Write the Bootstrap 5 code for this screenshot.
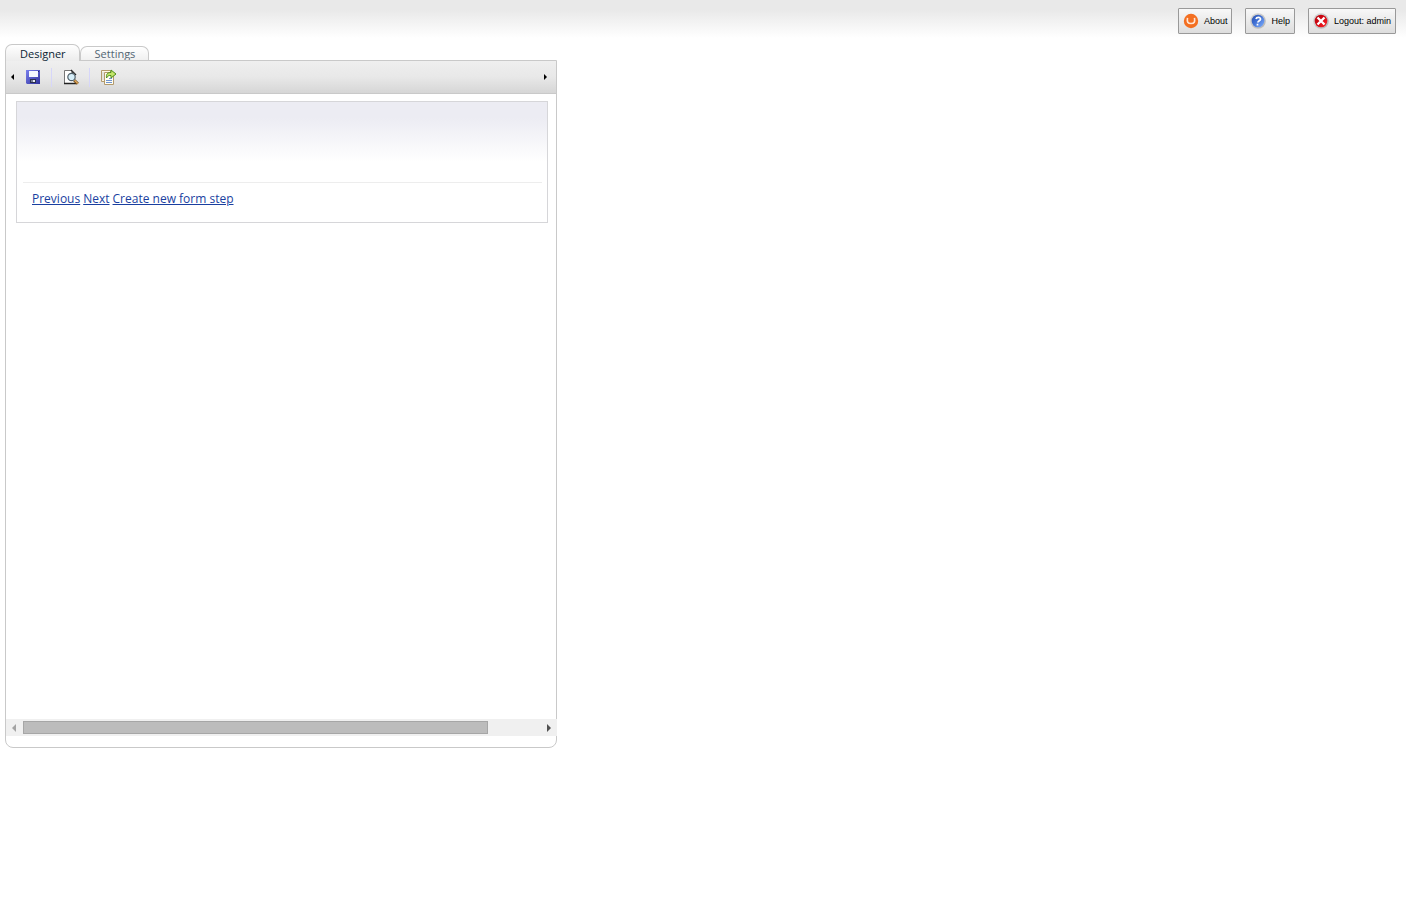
<!DOCTYPE html>
<html lang="en">
<head>
<meta charset="utf-8">
<meta name="viewport" content="width=device-width, initial-scale=1">
<title>Designer</title>
<link href="https://cdn.jsdelivr.net/npm/bootstrap@5.3.0/dist/css/bootstrap.min.css" rel="stylesheet">
<style>
body { font-family: "Open Sans", sans-serif; font-size: 12px; line-height: 16px; background: #fff; color: #111; }
.page-shell { padding-bottom: 150px; }
.topbar { height: 44px; padding: 8px 10px 0; gap: 13px; background: linear-gradient(#e9e9e9 0, #e9e9e9 10px, #fff 38px); }
.top-btn { height: 26px; padding: 0 4px; gap: 5px; font-family: "Liberation Sans", sans-serif; font-size: 9px; line-height: 12px; color: #000; border: 1px solid #999; border-radius: 1px; background: linear-gradient(#f8f8f8, #dddddd); }
.designer { max-width: 557px; padding-left: 5px; }
.designer .nav-tabs { border: 0; height: 16px; align-items: flex-end; }
.designer .nav-tabs .nav-link { height: 14px; padding: 0 13px 0 14px; margin: 0; font-size: 11px; line-height: 13px; color: #526573; border: 1px solid #c9c9c9; border-bottom: 0; border-radius: 7px 7px 0 0; background: linear-gradient(#fff, #f0f0f0); }
.designer .nav-tabs .nav-link.active { position: relative; z-index: 1; height: 17px; margin-bottom: -1px; line-height: 17px; color: #0a1d33; background: linear-gradient(#fff, #ececec); }
.panel { border: 1px solid #c9c9c9; border-radius: 0 0 8px 8px; padding-bottom: 11px; }
.toolbar { height: 33px; border-bottom: 1px solid #c9c9c9; background: linear-gradient(#efefef, #e8e8e8 50%, #d6d6d6); }
.tool-btn { padding: 0; border: 0; border-radius: 0; line-height: 0; }
.tool-arrow { width: 13px; height: 24px; }
.tool-sep { width: 1px; height: 19px; margin-right: 1px; background: #d6d6fa; }
.save-btn { margin: 0 10px 0 6px; }
.look-btn { margin: 0 10px; }
.copy-btn { margin-left: 9px; }
.canvas { padding: 7px 8px 0 10px; }
.step { border: 1px solid #d6d6d9; padding: 80px 5px 0 6px; background: linear-gradient(#ececf3 0, #ececf3 16px, #fff 60px); }
.step-links { border-top: 1px solid #ededed; padding: 8px 9px 15px; gap: 3px; }
.step-links a { color: #1a3fa0; }
.hscroll { height: 17px; margin-right: -1px; background: #f0f0f0; position: relative; }
.scroll-btn { width: 17px; height: 17px; }
.scroll-track { height: 13px; }
.scroll-thumb { width: 90%; height: 13px; background: #bcbcbc; border: 1px solid #a6a6a6; }
</style>
</head>
<body>
<div class="page-shell d-flex flex-column min-vh-100">
  <header class="topbar d-flex justify-content-end align-items-start">
    <button type="button" class="btn top-btn d-inline-flex align-items-center">
      <svg width="16" height="16" viewBox="0 0 16 16" aria-hidden="true"><circle cx="8" cy="8" r="7.2" fill="#f36f21"/><path d="M4.500 4.800c-.7 4.300.2 5.700 3.500 5.700s4.200-1.400 3.500-5.700" fill="none" stroke="#ffe6d6" stroke-width="1.600"/></svg>
      About
    </button>
    <button type="button" class="btn top-btn d-inline-flex align-items-center">
      <svg width="16" height="16" viewBox="0 0 16 16" aria-hidden="true"><defs><linearGradient id="blue" x2="1" y2="1"><stop stop-color="#2a50ac"/><stop offset=".4" stop-color="#3d6cd0"/><stop offset="1" stop-color="#80b0ff"/></linearGradient><linearGradient id="rim" x2="1" y2="1"><stop stop-color="#d8d8d8"/><stop offset="1" stop-color="#b2b2b2"/></linearGradient></defs><circle cx="8" cy="8" r="7.800" fill="url(#rim)"/><circle cx="8" cy="8" r="6.300" fill="url(#blue)"/><path d="M6 6c.5-2 4.700-2.200 4.500.1C10.400 7.700 8 7.700 7.800 9.500M7.500 10.800v1.600" stroke="#fff" stroke-width="1.700" fill="none"/></svg>
      Help
    </button>
    <button type="button" class="btn top-btn d-inline-flex align-items-center">
      <svg width="16" height="16" viewBox="0 0 16 16" aria-hidden="true"><defs><linearGradient id="red" x2="1" y2="1"><stop stop-color="#b20810"/><stop offset=".5" stop-color="#d50510"/><stop offset="1" stop-color="#ff3030"/></linearGradient></defs><circle cx="8" cy="8" r="7.800" fill="url(#rim)"/><circle cx="8" cy="8" r="6.300" fill="url(#red)"/><path d="M4.500 4.500l7 7M11.500 4.500l-7 7" stroke="#fff" stroke-width="2.300"/></svg>
      Logout: admin
    </button>
  </header>

  <main class="designer w-100 d-flex flex-column flex-fill">
    <ul class="nav nav-tabs">
      <li class="nav-item"><a class="nav-link active" href="#designer" aria-current="page">Designer</a></li>
      <li class="nav-item"><a class="nav-link" href="#settings">Settings</a></li>
    </ul>
    <section class="panel d-flex flex-column flex-fill">
      <div class="toolbar d-flex align-items-center">
        <button type="button" class="btn tool-btn tool-arrow" aria-label="Scroll toolbar left"><svg width="5" height="7" viewBox="0 0 5 7"><path d="M4 0v6L1 3z"/></svg></button>
        <button type="button" class="btn tool-btn save-btn" aria-label="Save">
          <svg width="16" height="16" viewBox="0 0 16 16"><defs><linearGradient id="disk" x2="1" y2="1"><stop stop-color="#7a80ee"/><stop offset="1" stop-color="#30329c"/></linearGradient></defs><path d="M1 1h14v14H2l-1-1z" fill="url(#disk)"/><path d="M4 2h9v6H4z" fill="#f4f8ff"/><path d="M13 2h1v1h-1z" fill="#20246c"/><path d="M5 10h6v4H5z" fill="#2a3050"/><path d="M8 11h2v2H8z" fill="#e8eaf2"/><path d="M6 11h2v2H6z" fill="#777e95"/></svg>
        </button>
        <span class="tool-sep"></span>
        <button type="button" class="btn tool-btn look-btn" aria-label="Preview">
          <svg width="16" height="16" viewBox="0 0 16 16"><path d="M1.500 1.500h7l3.500 3.500v9.500H1.500z" fill="#fff"/><path d="M1.500 14.500V1.500h7" fill="none" stroke="#777"/><path d="M8 1l5 5M1 14.500h12" fill="none" stroke="#222" stroke-width="1.300"/><path d="M8.500 1.500V5H12z" fill="#444"/><path d="M11.200 11.200l3.600 3.600" stroke="#6c4718" stroke-width="3"/><path d="M11.500 11.300l3.300 3.200" stroke="#e0a95c" stroke-width="1.500"/><circle cx="8.500" cy="8" r="3.700" fill="#d5edf8" stroke="#4f5f69" stroke-width="1.200"/></svg>
        </button>
        <span class="tool-sep"></span>
        <button type="button" class="btn tool-btn copy-btn" aria-label="Copy form">
          <svg width="17" height="16" viewBox="0 0 17 16"><path d="M1.500 1.500h9v11h-9z" fill="#fff9e6" stroke="#b39a6c"/><path d="M2.500 4h1M2.500 6h1M2.500 8h1M2.500 10h1" stroke="#8c9cbe"/><path d="M4.500 3.500h9v12h-9z" fill="#fffdf2" stroke="#b39a6c"/><path d="M6 11.500h6M6 13.500h6M9 9.500h3" stroke="#7195cf"/><path d="M6.500 9C6 5 7.500 3.500 11 3.500V1l5 4-5 4V6.500C9 6.200 7.500 7 6.500 9z" fill="#c3e46a" stroke="#4e8d1c"/></svg>
        </button>
        <button type="button" class="btn tool-btn tool-arrow ms-auto me-1" aria-label="Scroll toolbar right"><svg width="5" height="7" viewBox="0 0 5 7"><path d="M1 0v6l3-3z"/></svg></button>
      </div>
      <div class="canvas flex-fill">
        <div class="step">
          <nav class="step-links d-flex" aria-label="Form steps">
            <a href="#previous">Previous</a>
            <a href="#next">Next</a>
            <a href="#create">Create new form step</a>
          </nav>
        </div>
      </div>
      <div class="hscroll d-flex align-items-center">
        <button type="button" class="btn tool-btn scroll-btn" aria-label="Scroll left"><svg width="5" height="8" viewBox="0 0 5 8"><path d="M4 0v8L0 4z" fill="#a3a3a3"/></svg></button>
        <div class="scroll-track flex-fill"><div class="scroll-thumb"></div></div>
        <button type="button" class="btn tool-btn scroll-btn" aria-label="Scroll right"><svg width="5" height="8" viewBox="0 0 5 8"><path d="M1 0v8l4-4z" fill="#505050"/></svg></button>
      </div>
    </section>
  </main>
</div>
<script src="https://cdn.jsdelivr.net/npm/bootstrap@5.3.0/dist/js/bootstrap.bundle.min.js"></script>
</body>
</html>
